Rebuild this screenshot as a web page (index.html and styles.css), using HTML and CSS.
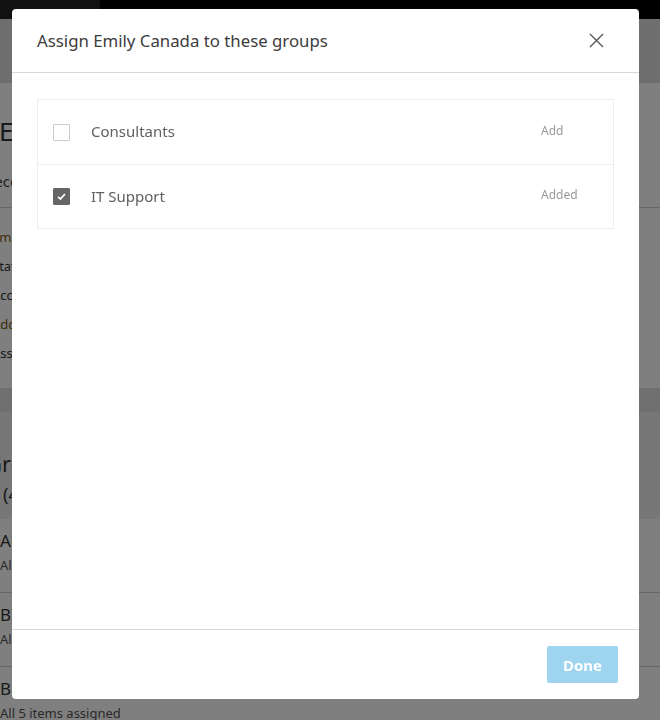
FILE: index.html
```html
<!DOCTYPE html>
<html lang="en">
<head>
  <meta charset="UTF-8" />
  <meta name="viewport" content="width=device-width, initial-scale=1.0" />
  <link rel="stylesheet" href="styles.css">
</head>
<body>

  <div class="page">
    <div class="topbar"><span class="topbar-tab"></span></div>
    <div class="subbar"></div>

    <div class="user-head">
      <h1>Emily Canada</h1>
      <p class="sub">Recently active</p>
    </div>

    <ul class="detail-list">
      <li class="accent">Email</li>
      <li>Status</li>
      <li>Account</li>
      <li class="accent">Address</li>
      <li>Assigned</li>
    </ul>

    <div class="band"></div>

    <div class="groups-head">
      <h2>Groups</h2>
      <p>(4)</p>
    </div>

    <div class="group-row">
      <div class="g-name">Architects</div>
      <div class="g-meta">All items assigned</div>
    </div>
    <div class="group-row">
      <div class="g-name">BIM Managers</div>
      <div class="g-meta">All items assigned</div>
    </div>
    <div class="group-row">
      <div class="g-name">Builders</div>
      <div class="g-meta">All 5 items assigned</div>
    </div>
  </div>

  <div class="overlay"></div>

  <div class="modal">
    <div class="modal-header">
      <h3>Assign Emily Canada to these groups</h3>
      <button class="close-btn" aria-label="Close">
        <svg width="15" height="15" viewBox="0 0 15 15">
          <path d="M1 1 L14 14 M14 1 L1 14" stroke="#555" stroke-width="1.4" fill="none" />
        </svg>
      </button>
    </div>

    <div class="modal-body">
      <div class="group-list">
        <div class="group-item">
          <span class="check"></span>
          <span class="label">Consultants</span>
          <span class="action">Add</span>
        </div>
        <div class="group-item">
          <span class="check checked">
            <svg width="11" height="11" viewBox="0 0 11 11">
              <path d="M2 5.8 L4.4 8 L9 3" stroke="#fff" stroke-width="1.8" fill="none" />
            </svg>
          </span>
          <span class="label">IT Support</span>
          <span class="action">Added</span>
        </div>
      </div>
    </div>

    <div class="modal-footer">
      <button class="done-btn">Done</button>
    </div>
  </div>

</body>
</html>
```

FILE: styles.css
```css
body {
  margin: 0;
  font-family: "Noto Sans", "Open Sans", sans-serif;
  background: white;
  overflow: hidden;
}

/* page behind the dialog */
.page {
  height: 720px;
  overflow: hidden;
  color: #333;
}
.topbar {
  height: 19px;
  background: #000;
}
.topbar-tab {
  display: block;
  width: 100px;
  height: 19px;
  background: #222;
}
.subbar {
  height: 64px;
  background: #dcdcdc;
}
.user-head {
  padding-top: 28px;
  margin-left: -1px;
  border-bottom: 1px solid #ccc;
  height: 125px;
  box-sizing: border-box;
}
.user-head h1 {
  margin: 0;
  font-size: 26px;
  font-weight: normal;
  line-height: 40px;
  letter-spacing: -0.5px;
}
.user-head .sub {
  margin: 18px 0 0 -14px;
  font-size: 15px;
  line-height: 24px;
  color: #444;
}
.detail-list {
  list-style: none;
  margin: 0 0 0 -8px;
  padding: 15px 0 0 0;
  height: 180px;
  box-sizing: border-box;
}
.detail-list li {
  font-size: 13px;
  line-height: 29px;
}
.detail-list li.accent {
  color: #7a5a10;
}
.band {
  height: 24px;
  background: #e0e0e0;
}
.groups-head {
  background: #eee;
  height: 107px;
  box-sizing: border-box;
  padding-top: 36px;
}
.groups-head h2 {
  margin: 0 0 0 -14px;
  font-size: 22px;
  font-weight: normal;
  line-height: 30px;
}
.groups-head p {
  margin: 2px 0 0 3px;
  font-size: 18px;
  line-height: 28px;
}
.group-row {
  height: 74px;
  border-bottom: 1px solid #ccc;
  box-sizing: border-box;
  padding-top: 10px;
}
.group-row .g-name {
  font-size: 17px;
  line-height: 24px;
}
.group-row .g-meta {
  margin-top: 2px;
  font-size: 13px;
  line-height: 20px;
  color: #555;
}

.overlay {
  position: fixed;
  inset: 0;
  background: rgba(0, 0, 0, 0.5);
}

/* dialog */
.modal {
  position: fixed;
  left: 12px;
  top: 9px;
  width: 627px;
  height: 690px;
  background: white;
  border-radius: 4px;
  display: flex;
  flex-direction: column;
}
.modal-header {
  height: 63px;
  padding: 0 35px 0 25px;
  display: flex;
  align-items: center;
  justify-content: space-between;
  border-bottom: 1px solid #d9d9d9;
  flex-shrink: 0;
}
.modal-header h3 {
  margin: 0;
  font-size: 16.8px;
  font-weight: normal;
  color: #3c3c3c;
}
.close-btn {
  border: none;
  background: none;
  padding: 0;
  width: 15px;
  height: 15px;
  cursor: pointer;
}
.modal-body {
  flex: 1;
  padding: 26px 25px 0 25px;
}
.group-list {
  border: 1px solid #eee;
}
.group-item {
  height: 64px;
  display: flex;
  align-items: center;
  padding-left: 15px;
  box-sizing: border-box;
}
.group-item + .group-item {
  border-top: 1px solid #eee;
}
.check {
  width: 17px;
  height: 17px;
  box-sizing: border-box;
  border: 1px solid #ccc;
  border-radius: 1px;
  display: flex;
  align-items: center;
  justify-content: center;
}
.check.checked {
  background: #666;
  border-color: #666;
}
.label {
  margin-left: 21px;
  margin-bottom: 2px;
  flex: 1;
  font-size: 15px;
  color: #606060;
}
.action {
  width: 72px;
  font-size: 12px;
  color: #999;
  margin-bottom: 4px;
}
.modal-footer {
  height: 70px;
  border-top: 1px solid #d9d9d9;
  display: flex;
  justify-content: flex-end;
  padding: 16px 21px 0 0;
  box-sizing: border-box;
  flex-shrink: 0;
}
.done-btn {
  width: 71px;
  height: 37px;
  border: none;
  border-radius: 2px;
  background: #9fd4ef;
  color: white;
  font-family: "Noto Sans", sans-serif;
  font-size: 15px;
  font-weight: bold;
}
```
